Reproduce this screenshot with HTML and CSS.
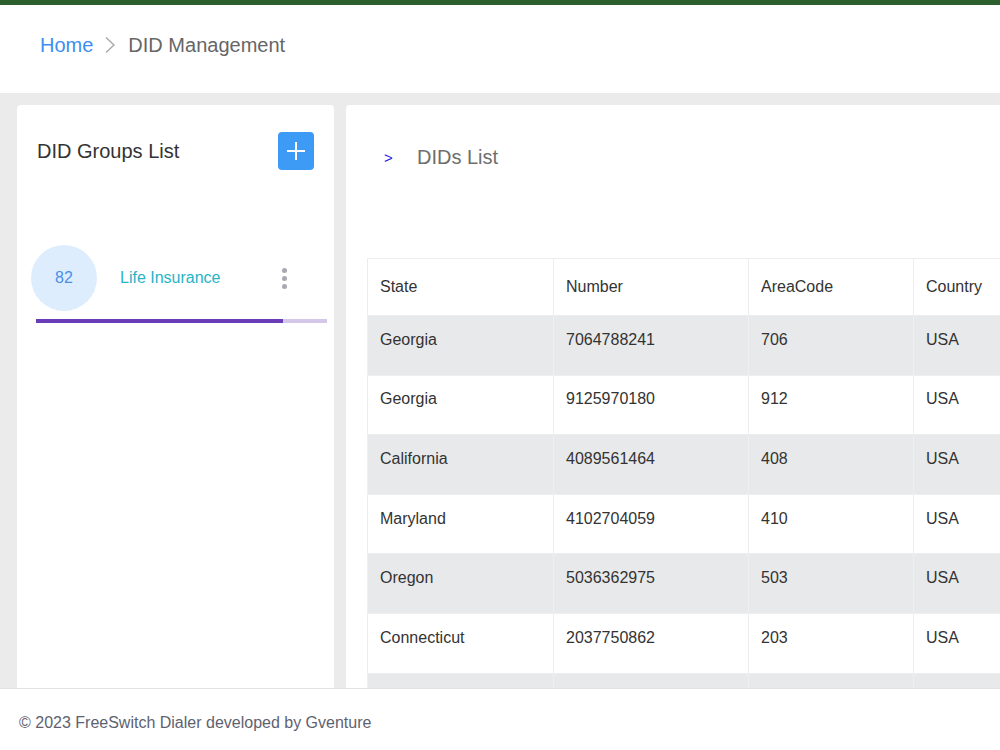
FILE: index.html
```html
<!DOCTYPE html>
<html lang="en">
<head>
<meta charset="UTF-8" />
<meta name="viewport" content="width=device-width, initial-scale=1" />
<title>DID Management</title>
<link rel="stylesheet" href="styles.css">
</head>
<body>

<div class="topbar"></div>

<!-- Breadcrumb -->
<div class="header">
  <a class="crumb-home" href="#">Home</a>
  <svg class="crumb-sep" width="12" height="18" viewBox="0 0 12 18"><path d="M2 1.5 L10 9 L2 16.5" fill="none" stroke="#a8a8a8" stroke-width="1.4"/></svg>
  <span class="crumb-current">DID Management</span>
</div>

<div class="main">
  <!-- Groups -->
  <div class="card groups">
    <div class="groups-head">
      <h2 class="card-title">DID Groups List</h2>
      <button class="add-btn">
        <svg width="20" height="20" viewBox="0 0 20 20"><path d="M10 1 V19 M1 10 H19" stroke="#fff" stroke-width="2"/></svg>
      </button>
    </div>
    <div class="group-item">
      <div class="group-count">82</div>
      <div class="group-name">Life Insurance</div>
      <div class="kebab"><span></span><span></span><span></span></div>
    </div>
    <div class="group-progress"><div class="group-progress-fill" style="width:85%"></div></div>
  </div>

  <!-- DIDs -->
  <div class="card dids">
    <div class="dids-head">
      <span class="dids-arrow">&gt;</span>
      <span class="dids-title">DIDs List</span>
    </div>
    <table class="did-table">
      <colgroup>
        <col style="width:186px"><col style="width:195px"><col style="width:165px"><col>
      </colgroup>
      <thead>
        <tr><th>State</th><th>Number</th><th>AreaCode</th><th>Country</th></tr>
      </thead>
      <tbody>
        <tr><td>Georgia</td><td>7064788241</td><td>706</td><td>USA</td></tr>
        <tr><td>Georgia</td><td>9125970180</td><td>912</td><td>USA</td></tr>
        <tr><td>California</td><td>4089561464</td><td>408</td><td>USA</td></tr>
        <tr><td>Maryland</td><td>4102704059</td><td>410</td><td>USA</td></tr>
        <tr><td>Oregon</td><td>5036362975</td><td>503</td><td>USA</td></tr>
        <tr><td>Connecticut</td><td>2037750862</td><td>203</td><td>USA</td></tr>
        <tr><td></td><td></td><td></td><td></td></tr>
      </tbody>
    </table>
  </div>
</div>

<div class="footer">© 2023 FreeSwitch Dialer developed by Gventure</div>

</body>
</html>
```

FILE: styles.css
```css
html, body {
  margin: 0;
  padding: 0;
  height: 100%;
  overflow: hidden;
}
body {
  display: flex;
  flex-direction: column;
  background-color: #ebebeb;
  font-family: "Liberation Sans", Arial, sans-serif;
  color: #333;
}
.topbar {
  height: 5px;
  background: #2b5f2c;
  flex-shrink: 0;
}
.header {
  height: 88px;
  flex-shrink: 0;
  background: #fff;
  display: flex;
  align-items: center;
  padding: 0 0 8px 40px;
  box-sizing: border-box;
  font-size: 20px;
}
.crumb-home {
  color: #3d8ef0;
  text-decoration: none;
}
.crumb-sep {
  margin: 0 12px 0 11px;
}
.crumb-current {
  color: #666;
}
.main {
  flex: 1;
  display: flex;
  gap: 12px;
  padding: 12px 0 0 17px;
  overflow: hidden;
  min-height: 0;
}
.card {
  background: #fff;
  border-radius: 4px 4px 0 0;
  flex-shrink: 0;
}
.groups {
  width: 317px;
  padding: 27px 7px 0 14px;
  box-sizing: border-box;
}
.groups-head {
  display: flex;
  justify-content: space-between;
  align-items: center;
  padding: 0 13px 0 6px;
}
.card-title {
  margin: 0;
  font-size: 20px;
  font-weight: normal;
  color: #333;
}
.add-btn {
  width: 36px;
  height: 38px;
  border: none;
  border-radius: 4px;
  background: #3d9af5;
  display: flex;
  align-items: center;
  justify-content: center;
  padding: 0;
}
.group-item {
  display: flex;
  align-items: center;
  margin-top: 75px;
}
.group-count {
  width: 66px;
  height: 66px;
  border-radius: 50%;
  background: #deedfd;
  color: #4a8fe6;
  font-size: 16px;
  display: flex;
  align-items: center;
  justify-content: center;
}
.group-name {
  flex: 1;
  margin-left: 23px;
  color: #27b4c6;
  font-size: 16px;
}
.kebab {
  display: flex;
  flex-direction: column;
  gap: 3px;
  margin-right: 40px;
}
.kebab span {
  width: 5px;
  height: 5px;
  border-radius: 50%;
  background: #a8a8b0;
}
.group-progress {
  height: 4px;
  margin: 8px 0 0 5px;
  background: #d3c7ea;
}
.group-progress-fill {
  height: 100%;
  background: #6a3cb8;
}
.dids {
  width: 760px;
  padding: 40px 0 0 21px;
  box-sizing: border-box;
}
.dids-head {
  display: flex;
  align-items: center;
  padding-left: 17px;
  height: 24px;
}
.dids-arrow {
  color: #1a1aee;
  font-size: 15px;
  width: 33px;
}
.dids-title {
  color: #6e6e6e;
  font-size: 20px;
}
.did-table {
  margin-top: 89px;
  width: 739px;
  table-layout: fixed;
  border-collapse: collapse;
  font-size: 16px;
}
.did-table th, .did-table td {
  text-align: left;
  font-weight: normal;
  padding: 0 12px;
  border: 1px solid #eceded;
  color: #333;
}
.did-table td {
  padding-bottom: 11px;
}
.did-table thead tr {
  height: 57px;
}
.did-table tbody tr {
  height: 59.6px;
}
.did-table tbody tr:nth-child(odd) {
  background: #e8e9ea;
}
.did-table tbody tr:nth-child(odd) td {
  border-color: #efefef;
}
.footer {
  height: 62px;
  flex-shrink: 0;
  background: #fff;
  border-top: 1px solid #e2e2e2;
  box-sizing: border-box;
  display: flex;
  align-items: center;
  padding: 6px 0 0 19px;
  font-size: 16px;
  color: #5e6270;
}
```
